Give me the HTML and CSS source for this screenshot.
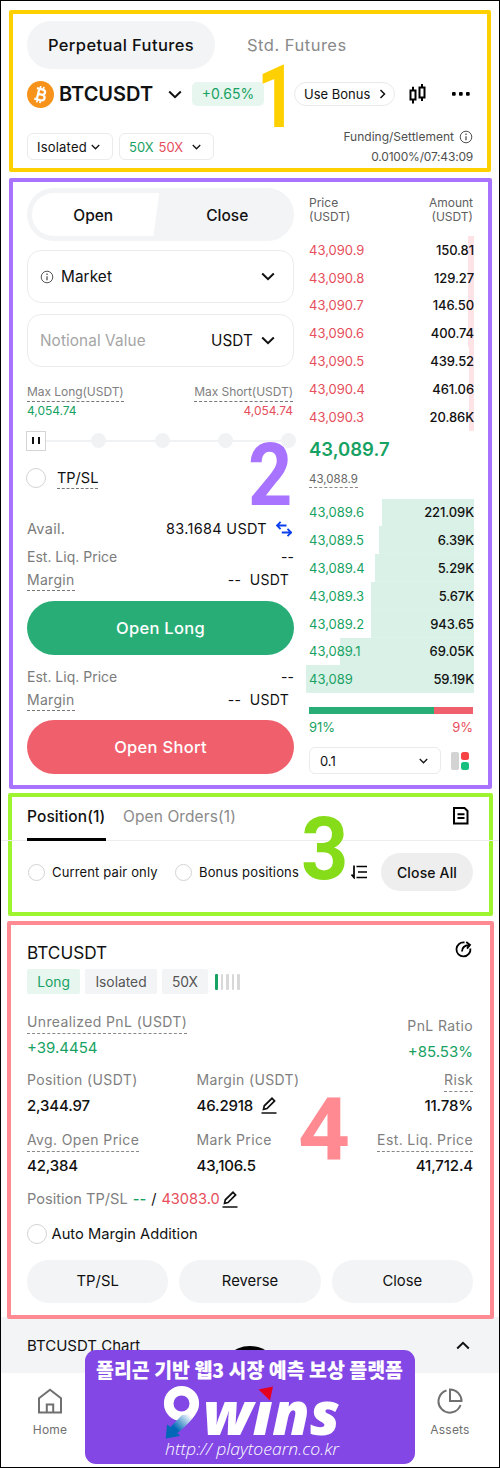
FILE: index.html
```html
<!DOCTYPE html>
<html lang="en">
<head>
    <meta charset="utf-8">
    <title>BTCUSDT Perpetual Futures</title>
    <link rel="stylesheet" href="styles.css">
</head>
<body>
    <svg class="symbols" width="0" height="0">
        <symbol id="down" viewBox="0 0 14 9"><path d="M1.2 1.5 7 7.2 12.8 1.5" fill="none" stroke="currentColor" stroke-width="2"/></symbol>
        <symbol id="info" viewBox="0 0 14 14"><circle cx="7" cy="7" r="5.8" fill="none" stroke="currentColor"/><path d="M7 6.2v4M7 3.6v1.3" stroke="currentColor" stroke-width="1.3"/></symbol>
        <symbol id="edit" viewBox="0 0 16 17"><path d="M.5 16h15M2.500 12.400l.8-3.600L11 1.300l2.600 2.600L6 11.600z" fill="none" stroke="currentColor" stroke-width="1.7"/></symbol>
    </svg>

    <div class="page">
        <!-- 1: market header -->
        <section class="box box-header">
            <div class="tabs">
                <span class="tab active">Perpetual Futures</span>
                <span class="tab">Std. Futures</span>
            </div>
            <div class="pair-row">
                <svg class="coin" width="27" height="27" viewBox="0 0 27 27">
                    <circle cx="13.5" cy="13.5" r="13.5" fill="#f7931a"/>
                    <g transform="rotate(14 13.5 13.5)" fill="none" stroke="#fff" stroke-width="2.2">
                        <path d="M8.500 8.200h6q3 0 3 2.600t-3 2.600h-3.500h4q3.300 0 3.300 2.800t-3.300 2.800H8.500M11 8.200v10.800"/>
                        <path d="M11.800 5.300v3M15 5.300v3M11.800 19v3M15 19v3" stroke-width="1.7"/>
                    </g>
                </svg>
                <b class="pair">BTCUSDT</b>
                <svg class="pair-arrow" width="14" height="9"><use href="#down"/></svg>
                <span class="change">+0.65%</span>
                <span class="bonus">Use Bonus
                    <svg width="7" height="10" viewBox="0 0 7 10"><path d="M1.500 1 5.500 5 1.500 9" fill="none" stroke="#111" stroke-width="1.5"/></svg>
                </span>
                <svg class="candles" width="18" height="20" viewBox="0 0 18 20" fill="none" stroke="#000" stroke-width="2"><path d="M1.500 6.500h5v9h-5zM4 2.800v3.700M4 15.500v4M10.500 3.500h5v10h-5zM13 0v3.500M13 13.500V17"/></svg>
                <svg class="dots" width="18" height="4" viewBox="0 0 18 4"><rect width="3.7" height="3.7" rx="1"/><rect x="7" width="3.7" height="3.7" rx="1"/><rect x="14" width="3.7" height="3.7" rx="1"/></svg>
            </div>
            <div class="mode-row">
                <span class="chip isolated">Isolated <svg width="9" height="6"><use href="#down"/></svg></span>
                <span class="chip leverage"><i class="green">50X</i> <i class="red">50X</i> <svg width="9" height="6"><use href="#down"/></svg></span>
                <div class="funding">
                    <div>Funding/Settlement <svg width="14" height="14"><use href="#info"/></svg></div>
                    <div class="rate">0.0100%/07:43:09</div>
                </div>
            </div>
            <span class="num num-1">1</span>
        </section>

        <!-- 2: order form and order book -->
        <section class="box box-trade">
            <div class="form">
                <div class="toggle"><span class="toggle-on">Open</span><span>Close</span></div>
                <div class="field"><svg width="14" height="14"><use href="#info"/></svg><span class="grow">Market</span><svg width="14" height="9"><use href="#down"/></svg></div>
                <div class="field"><span class="grow placeholder">Notional Value</span><span class="unit">USDT</span><svg width="14" height="9"><use href="#down"/></svg></div>
                <div class="max">
                    <div><span class="hint">Max Long(USDT)</span><span class="green">4,054.74</span></div>
                    <div class="end"><span class="hint">Max Short(USDT)</span><span class="red">4,054.74</span></div>
                </div>
                <div class="slider"><span class="thumb"></span><i></i><i></i><i></i><i></i></div>
                <div class="tpsl"><span class="radio"></span><span class="under">TP/SL</span></div>
                <div class="line avail"><span>Avail.</span><em>83.1684 USDT</em>
                    <svg width="16" height="16" viewBox="0 0 16 16" fill="none" stroke="#0b3ff0" stroke-width="1.8"><path d="M10.500 4.500H1M4.600.8.9 4.500l3.700 3.700M5.800 11.500H15M11.500 7.800l3.700 3.700-3.700 3.700"/></svg>
                </div>
                <div class="line liq"><span>Est. Liq. Price</span><em>--</em></div>
                <div class="line margin"><span class="under">Margin</span><em>--&nbsp; USDT</em></div>
                <div class="btn long">Open Long</div>
                <div class="line liq"><span>Est. Liq. Price</span><em>--</em></div>
                <div class="line margin"><span class="under">Margin</span><em>--&nbsp; USDT</em></div>
                <div class="btn short">Open Short</div>
            </div>
            <div class="book">
                <div class="book-head"><span>Price<br>(USDT)</span><span>Amount<br>(USDT)</span></div>
                <div class="rows asks">
                    <div style="--w:6px"><span>43,090.9</span><b>150.81</b></div>
                    <div style="--w:6px"><span>43,090.8</span><b>129.27</b></div>
                    <div style="--w:6px"><span>43,090.7</span><b>146.50</b></div>
                    <div style="--w:6px"><span>43,090.6</span><b>400.74</b></div>
                    <div style="--w:5px"><span>43,090.5</span><b>439.52</b></div>
                    <div style="--w:5px"><span>43,090.4</span><b>461.06</b></div>
                    <div style="--w:5px"><span>43,090.3</span><b>20.86K</b></div>
                </div>
                <div class="last">43,089.7</div>
                <div class="mark"><span>43,088.9</span></div>
                <div class="rows bids">
                    <div style="--w:92px"><span>43,089.6</span><b>221.09K</b></div>
                    <div style="--w:95px"><span>43,089.5</span><b>6.39K</b></div>
                    <div style="--w:99px"><span>43,089.4</span><b>5.29K</b></div>
                    <div style="--w:103px"><span>43,089.3</span><b>5.67K</b></div>
                    <div style="--w:103px"><span>43,089.2</span><b>943.65</b></div>
                    <div style="--w:134px"><span>43,089.1</span><b>69.05K</b></div>
                    <div style="--w:168px"><span>43,089</span><b>59.19K</b></div>
                </div>
                <div class="ratio"></div>
                <div class="ratio-text"><span class="green">91%</span><span class="red">9%</span></div>
                <div class="depth">
                    <div class="select">0.1<svg width="9" height="6"><use href="#down"/></svg></div>
                    <svg width="18" height="18" viewBox="0 0 18 18"><rect width="8" height="18" rx="2" fill="#d3d3d3"/><rect x="10" width="8" height="8" rx="2.5" fill="#f64444"/><rect x="10" y="10" width="8" height="8" rx="2.5" fill="#16bf7e"/></svg>
                </div>
            </div>
            <span class="num num-2">2</span>
        </section>

        <!-- 3: position tabs and filters -->
        <section class="box box-filter">
            <div class="pos-tabs">
                <span class="pos-tab active">Position(1)</span>
                <span class="pos-tab">Open Orders(1)</span>
                <svg width="16" height="18" viewBox="0 0 16 18" fill="none" stroke="#000" stroke-width="2"><path d="M1 1h10.500L14.500 4v12.500H1zM4.500 7.200h7M4.500 11h7"/></svg>
            </div>
            <div class="filters">
                <span class="radio small"></span><span class="f-pair">Current pair only</span>
                <span class="radio small"></span><span class="f-bonus">Bonus positions</span>
                <svg width="16" height="14" viewBox="0 0 16 14" fill="none" stroke="#000" stroke-width="1.7"><path d="M3 .5v12L.5 9.500M5.500 1.500H16M7 7h9M5.500 12.500H16"/></svg>
                <span class="close-all">Close All</span>
            </div>
            <span class="num num-3">3</span>
        </section>

        <!-- 4: open position -->
        <section class="box box-position">
            <div class="pos-head"><span>BTCUSDT</span>
                <svg width="17" height="17" viewBox="0 0 17 17" fill="none" stroke="#000" stroke-width="1.8"><path d="M9.500 1.500A7 7 0 1 0 15.400 7.500M7 10.500C7 7 9 4.500 14 4M11.200 1l3.800 2.900-3 3.700"/></svg>
            </div>
            <div class="tags">
                <span class="tag tag-long">Long</span><span class="tag tag-iso">Isolated</span><span class="tag tag-x">50X</span>
                <span class="risk-bars"><i></i><i></i><i></i><i></i><i></i></span>
            </div>
            <div class="pnl">
                <div class="cell"><span class="label"><u>Unrealized PnL (USDT)</u></span><span class="value green">+39.4454</span></div>
                <div class="cell end pnl-ratio"><span class="label">PnL Ratio</span><span class="value green">+85.53%</span></div>
            </div>
            <div class="stats">
                <div class="cell"><span class="label">Position (USDT)</span><span class="value">2,344.97</span></div>
                <div class="cell"><span class="label">Margin (USDT)</span><span class="value">46.2918 <svg width="16" height="17"><use href="#edit"/></svg></span></div>
                <div class="cell end"><span class="label"><u>Risk</u></span><span class="value">11.78%</span></div>
                <div class="cell"><span class="label"><u>Avg. Open Price</u></span><span class="value">42,384</span></div>
                <div class="cell"><span class="label">Mark Price</span><span class="value">43,106.5</span></div>
                <div class="cell end"><span class="label"><u>Est. Liq. Price</u></span><span class="value">41,712.4</span></div>
            </div>
            <div class="pos-tpsl">Position TP/SL <b class="green">--</b> <span class="slash">/</span> <span class="red">43083.0</span><svg width="16" height="17"><use href="#edit"/></svg></div>
            <div class="auto"><span class="radio"></span>Auto Margin Addition</div>
            <div class="actions"><span>TP/SL</span><span>Reverse</span><span>Close</span></div>
            <span class="num num-4">4</span>
        </section>

        <div class="chart-bar"><span>BTCUSDT Chart</span><svg class="up" width="14" height="9"><use href="#down"/></svg></div>
        <nav class="nav">
            <div class="nav-item">
                <svg width="26" height="26" viewBox="0 0 26 26" fill="none" stroke="#707070" stroke-width="2"><path d="M2 10.200 13 1.700l11 8.500V24.500H2zM9.800 24.500v-8h6.400v8"/></svg>
                <span>Home</span>
            </div>
            <div class="nav-item">
                <svg width="26" height="26" viewBox="0 0 26 26" fill="none" stroke="#707070" stroke-width="2"><path d="M9.500 2.500A11.300 11.300 0 1 0 23.500 17M13 1.500V13h11.500A11.500 11.500 0 0 0 13 1.500z"/></svg>
                <span>Assets</span>
            </div>
        </nav>

        <span class="fab"></span>
        <!-- sponsor banner over the bottom bar -->
        <div class="banner">
            <svg width="330" height="114" viewBox="0 0 330 114">
                <defs>
                    <linearGradient id="tail" gradientUnits="userSpaceOnUse" x1="104" y1="64" x2="90" y2="78"><stop offset="0" stop-color="#fff"/><stop offset="1" stop-color="#0068b7"/></linearGradient>
                </defs>
                <text class="ko" x="11" y="27.5" textLength="307" lengthAdjust="spacingAndGlyphs">폴리곤 기반 웹3 시장 예측 보상 플랫폼</text>
                <circle cx="96.500" cy="53.5" r="12.8" fill="none" stroke="#fff" stroke-width="9.6"/>
                <path d="M97 65 111 63.500Q106 72 92.500 83L95 86 80.700 88.500 82 74.500 85.500 77z" fill="url(#tail)"/>
                <text class="wins" x="118" y="85" textLength="137" lengthAdjust="spacingAndGlyphs">wıns</text>
                <path d="M173.500 39.500 188 36.500 185 50.500z" fill="#e60020"/>
                <text class="url" x="80" y="105" textLength="174" lengthAdjust="spacingAndGlyphs">http:// playtoearn.co.kr</text>
            </svg>
        </div>
    </div>
</body>
</html>
```
FILE: styles.css
```css
* {
    box-sizing: border-box;
}
body {
    margin: 0;
    font-family: Inter, "Liberation Sans", sans-serif;
    color: #111;
    background: #fff;
}
svg {
    display: block;
    flex: none;
}
i, em {
    font-style: normal;
}
.symbols {
    position: absolute;
}
.page {
    position: relative;
    width: 500px;
    height: 1468px;
    border: 1px solid #000;
    padding-top: 9px;
    overflow: hidden;
    white-space: nowrap;
}
.green { color: #17a263; }
.red { color: #e64e5c; }

.box {
    position: relative;
    border: 4px solid;
    border-radius: 2px;
}
.box-header {
    height: 162px;
    margin: 0 8px;
    padding: 7px 14px;
    border-color: #ffd000;
}
.box-trade {
    height: 611px;
    margin: 6px 7px 0 8px;
    padding: 6px 14px 0 14px;
    border-color: #a874ff;
    display: flex;
    justify-content: space-between;
}
.box-filter {
    height: 123px;
    margin: 4px 6px 0 7px;
    padding: 0 16px 0 15px;
    border-color: #9ef52f;
}
.box-position {
    height: 398px;
    margin: 5px 5px 0 6px;
    padding: 14px 17px 0 16px;
    border-color: #ff8a92;
    z-index: 1;
}

/* big section numbers */
.num {
    position: absolute;
    font: bold 88px/88px Roboto, sans-serif;
    transform-origin: left top;
}
.num-1 { left: 244px; top: 39px; color: #ffd000; transform: scaleX(0.78); }
.num-2 { left: 235px; top: 249px; color: #a874ff; transform: scaleX(0.88); }
.num-3 { left: 289px; top: 8px; color: #86dc18; transform: scaleX(0.94); }
.num-4 { left: 287px; top: 161px; color: #ff8a92; transform: scaleX(1.03); }

/* header */
.tabs {
    display: flex;
    height: 48px;
    line-height: 48px;
    font-size: 16.5px;
    color: #8a8a8a;
    letter-spacing: 0.3px;
}
.tab.active {
    width: 188px;
    margin-right: 32px;
    text-align: center;
    color: #111;
    font-weight: 500;
    letter-spacing: 0.4px;
    background: #f3f4f6;
    border-radius: 24px;
}
.tab:last-child {
    letter-spacing: 0.5px;
}
.pair-row {
    display: flex;
    align-items: center;
    height: 50px;
}
.pair {
    width: 109px;
    padding-left: 5px;
    font-size: 20px;
    font-weight: 600;
}
.pair-arrow {
    margin-left: 5px;
}
.change {
    width: 72px;
    margin-left: 10px;
    height: 24px;
    line-height: 24px;
    text-align: center;
    font-size: 14px;
    color: #17a263;
    background: #e7f6ef;
    border-radius: 5px;
}
.bonus {
    display: flex;
    align-items: center;
    justify-content: space-between;
    width: 101px;
    height: 24px;
    margin-left: 30px;
    padding: 0 8px 0 9px;
    font-size: 13px;
    border: 1px solid #e9e9eb;
    border-radius: 12px;
}
.candles { margin-left: 14px; }
.dots { margin-left: 25px; }
.mode-row {
    display: flex;
    padding-top: 14px;
}
.chip {
    display: flex;
    align-items: center;
    justify-content: space-between;
    height: 27px;
    margin-right: 6px;
    padding: 0 12px 0 10px;
    font-size: 13px;
    border: 1px solid #ebebed;
    border-radius: 6px;
}
.isolated { width: 86px; padding-left: 9px; letter-spacing: 0.2px; }
.leverage { width: 95px; padding-left: 9px; }
.leverage svg { margin-left: 4px; }
.funding {
    margin-left: auto;
    margin-top: -7px;
    font-size: 12px;
    line-height: 21px;
    color: #505050;
    text-align: right;
}
.funding div {
    display: flex;
    align-items: center;
    justify-content: flex-end;
    gap: 5px;
}
.funding .rate {
    margin-top: -1px;
    letter-spacing: -0.2px;
}

/* order form */
.form {
    width: 267px;
}
.toggle {
    display: flex;
    height: 53px;
    padding: 5px;
    font-size: 15.5px;
    font-weight: 500;
    line-height: 45px;
    text-align: center;
    background: #f3f4f6;
    border-radius: 27px;
}
.toggle span {
    width: 50%;
    padding-left: 5px;
}
.toggle .toggle-on {
    padding-left: 0;
    padding-right: 6px;
    background: #fff;
    border-radius: 22px 0 0 22px;
    clip-path: polygon(0 0, 99% 0, 94.5% 100%, 0 100%);
}
.field {
    display: flex;
    align-items: center;
    height: 53px;
    margin-top: 9px;
    padding: 0 18px 0 12px;
    font-size: 15.3px;
    letter-spacing: 0.1px;
    border: 1px solid #ececee;
    border-radius: 14px;
}
.field + .field {
    margin-top: 10.5px;
}
.field svg + .grow {
    margin-left: 7px;
}
.field svg:first-child {
    color: #555;
}
.grow { flex: 1; }
.placeholder { color: #a5a5a5; }
.unit { margin-right: 8px; }
.max {
    display: flex;
    justify-content: space-between;
    height: 64px;
    padding: 16.5px 1px 0 0;
    font-size: 12px;
    letter-spacing: -0.05px;
}
.max div {
    display: flex;
    flex-direction: column;
    align-items: flex-start;
    line-height: 18px;
}
.max .end { align-items: flex-end; }
.hint {
    height: 19px;
    color: #808080;
    border-bottom: 1px dashed #777;
}
.slider {
    display: flex;
    align-items: center;
    justify-content: space-between;
    height: 20px;
    margin: 0 -2px 0 -1px;
    background: linear-gradient(#f1f2f4, #f1f2f4) center / 100% 2px no-repeat;
}
.slider i {
    width: 15px;
    height: 15px;
    background: #f1f2f4;
    border-radius: 50%;
}
.thumb {
    width: 20px;
    height: 20px;
    margin-right: -3px;
    border: 1px solid #d5d5d5;
    background: linear-gradient(90deg, #111 2px, transparent 2px 6px, #111 6px) center / 8px 7px no-repeat, #fff;
}
.radio {
    width: 20px;
    height: 20px;
    border: 1px solid #d3d3d3;
    border-radius: 50%;
}
.radio.small {
    width: 17px;
    height: 17px;
}
.tpsl {
    display: flex;
    align-items: center;
    height: 22px;
    margin: 16.5px 0 0 -1px;
    font-size: 14.5px;
}
.tpsl .under { margin-left: 11px; line-height: 21px; }
.under {
    border-bottom: 1px dashed #777;
}
.line {
    display: flex;
    align-items: center;
    justify-content: space-between;
    font-size: 14px;
    color: #7b7b7b;
    letter-spacing: 0.3px;
}
.line em { color: #111; }
.avail { height: 28px; margin-top: 25.5px; font-size: 14.5px; }
.avail em { margin-left: auto; margin-right: 9px; }
.avail svg { margin-right: 2px; }
.liq { height: 24px; margin-top: 1.5px; letter-spacing: 0; }
.margin { height: 23px; padding-right: 5px; }
.margin .under { line-height: 21px; }
.btn {
    height: 54px;
    margin-top: 9.5px;
    line-height: 55px;
    text-align: center;
    color: #fff;
    font-size: 16.5px;
    font-weight: 500;
    letter-spacing: 0.3px;
    border-radius: 27px;
}
.long { background: #29ad77; margin-bottom: 9.5px; }
.short { background: #f0606c; margin-top: 9px; }

/* order book */
.book {
    width: 168px;
}
.book-head {
    display: flex;
    justify-content: space-between;
    height: 48px;
    padding: 8px 1px 0 3px;
    font-size: 12px;
    line-height: 14px;
    color: #606060;
}
.book-head span:last-child { text-align: right; }
.rows div {
    display: flex;
    align-items: center;
    justify-content: space-between;
    height: 27.8px;
    padding-left: 3px;
    font-size: 13px;
    background: linear-gradient(#fde3e6, #fde3e6) right / var(--w) 100% no-repeat;
}
.rows b {
    font-weight: 500;
    letter-spacing: -0.1px;
    color: #111;
}
.asks { color: #e64e5c; }
.bids { color: #17a263; }
.rows.bids div { background-image: linear-gradient(#daf1e7, #daf1e7); }
.last {
    height: 38px;
    padding-left: 3px;
    line-height: 36px;
    font-size: 18.5px;
    font-weight: 600;
    color: #17a263;
}
.mark {
    height: 30px;
    padding: 2px 0 0 3px;
    font-size: 11.5px;
    line-height: 16px;
    color: #666;
}
.mark span {
    display: inline-block;
    border-bottom: 1px dashed #888;
}
.ratio {
    height: 7px;
    margin: 14px 1px 0 3px;
    background: linear-gradient(90deg, #29ad77 76%, #f0606c 76%);
}
.ratio-text {
    display: flex;
    justify-content: space-between;
    padding: 0 1px 0 3px;
    line-height: 26px;
    font-size: 13px;
}
.depth {
    display: flex;
    align-items: center;
    justify-content: space-between;
    margin: 7px 5px 0 3px;
}
.select {
    display: flex;
    align-items: center;
    justify-content: space-between;
    width: 132px;
    height: 27px;
    padding: 0 12px 0 10px;
    font-size: 13px;
    border: 1px solid #ebebed;
    border-radius: 6px;
}

/* positions */
.pos-tabs {
    display: flex;
    align-items: center;
    height: 44px;
    margin: 0 -26px;
    padding: 0 30px 0 26px;
    font-size: 15.5px;
    color: #8a8a8a;
    letter-spacing: 0.1px;
    border-bottom: 1px solid #ededee;
}
.pos-tab {
    height: 44px;
    line-height: 39px;
}
.pos-tab.active {
    width: 79px;
    margin-right: 17px;
    color: #111;
    font-weight: 500;
    border-bottom: 3px solid #000;
}
.pos-tabs svg { margin-left: auto; margin-top: -5px; }
.filters {
    display: flex;
    align-items: center;
    height: 62px;
    padding-left: 1px;
    font-size: 13px;
    letter-spacing: 0.15px;
}
.f-pair { width: 123px; margin-left: 7px; }
.f-bonus { width: 152px; margin-left: 7px; }
.close-all {
    width: 92px;
    height: 38px;
    margin-left: auto;
    line-height: 39px;
    text-align: center;
    font-size: 14px;
    font-weight: 500;
    background: #eee;
    border-radius: 19px;
}
.pos-head {
    display: flex;
    justify-content: space-between;
    height: 30px;
    padding: 2px 1px 0 0;
    font-size: 17.2px;
    line-height: 23px;
}
.tags {
    display: flex;
    gap: 5px;
    height: 25px;
    line-height: 26px;
    font-size: 13.8px;
    text-align: center;
    color: #555;
}
.tag { background: #f3f4f6; border-radius: 2px; }
.tag-long { width: 53px; color: #17a263; background: #e7f6ef; }
.tag-iso { width: 72px; }
.tag-x { width: 46px; }
.risk-bars {
    display: flex;
    gap: 3px;
    padding: 5px 0 0 2px;
}
.risk-bars i {
    width: 2.6px;
    height: 16px;
    background: #d8d8d8;
    border-radius: 1px;
}
.risk-bars i:first-child { background: #17a263; }
.pnl {
    display: flex;
    justify-content: space-between;
    height: 75px;
    padding-top: 17px;
}
.pnl-ratio { padding-top: 4px; }
.cell {
    display: flex;
    flex-direction: column;
    align-items: flex-start;
}
.cell.end { align-items: flex-end; }
.label {
    height: 25px;
    line-height: 22px;
    font-size: 14px;
    letter-spacing: 0.38px;
    color: #808080;
}
.label u {
    display: block;
    height: 23px;
    text-decoration: none;
    border-bottom: 1px dashed #888;
}
.value {
    display: flex;
    gap: 6px;
    height: 24px;
    line-height: 24px;
    font-size: 15px;
    font-weight: 500;
    letter-spacing: -0.15px;
}
.value svg { margin: 3px 0 0 2px; }
.stats {
    display: grid;
    grid-template-columns: 169.5px 150px 1fr;
    grid-auto-rows: 59.5px;
}
.value.green {
    font-weight: 400;
    letter-spacing: 0;
}
.pos-tpsl {
    display: flex;
    align-items: center;
    gap: 5px;
    height: 22px;
    font-size: 14.6px;
    color: #808080;
}
.pos-tpsl b { font-weight: 500; }
.slash { color: #111; }
.pos-tpsl svg {
    margin-left: -3px;
    color: #111;
}
.auto {
    display: flex;
    align-items: center;
    gap: 5px;
    height: 48px;
    font-size: 14.7px;
}
.auto .radio { margin-left: -0.5px; }
.actions {
    display: flex;
    justify-content: space-between;
    gap: 11px;
    padding-top: 2px;
}
.actions span {
    flex: 1;
    height: 43px;
    line-height: 43px;
    text-align: center;
    font-size: 14.8px;
    background: #f3f4f6;
    border-radius: 22px;
}

/* bottom */
.chart-bar {
    display: flex;
    align-items: center;
    justify-content: space-between;
    height: 56px;
    margin-top: -2px;
    padding: 0 29px 0 26px;
    font-size: 15px;
    background: #f3f4f6;
}
.up { transform: rotate(180deg); }
.nav {
    display: flex;
    justify-content: space-between;
    padding: 15px 19px 0;
}
.nav-item {
    display: flex;
    flex-direction: column;
    align-items: center;
    gap: 8px;
    width: 60px;
    font-size: 12px;
    line-height: 16px;
    letter-spacing: 0.2px;
    color: #707070;
}
.fab {
    position: absolute;
    left: 217px;
    top: 1345px;
    width: 64px;
    height: 64px;
    border-radius: 50%;
    background: #000;
}
.banner {
    position: absolute;
    left: 84px;
    top: 1349px;
    width: 330px;
    height: 114px;
    background: #8247e5;
    border-radius: 11px;
    overflow: hidden;
}
.banner text { fill: #fff; }
.ko { font: 900 20px "Noto Sans CJK KR", sans-serif; }
.wins { font: italic 800 60px "Open Sans", sans-serif; }
.url { font: italic 300 17px "Open Sans", sans-serif; }
```
